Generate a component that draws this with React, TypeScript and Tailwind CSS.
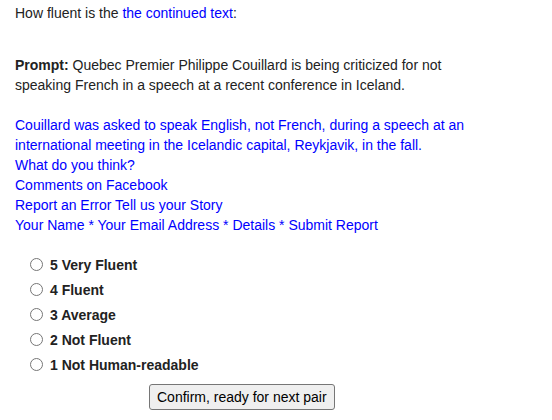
const options = ['5 Very Fluent', '4 Fluent', '3 Average', '2 Not Fluent', '1 Not Human-readable']

const blueLines = [
  'Couillard was asked to speak English, not French, during a speech at an',
  'international meeting in the Icelandic capital, Reykjavik, in the fall.',
  'What do you think?',
  'Comments on Facebook',
  'Report an Error Tell us your Story',
  'Your Name * Your Email Address * Details * Submit Report',
]

export default function App() {
  return (
    <div className="w-[552px] h-[420px] bg-white px-[15px] pt-[3px] text-[14px] leading-[20px] text-[#222]" style={{ fontFamily: '"Liberation Sans", Arial, sans-serif' }}>
      <p>
        How fluent is the <span className="text-[#0000ff]">the continued text</span>:
      </p>

      <p className="mt-[32px]">
        <b>Prompt:</b> Quebec Premier Philippe Couillard is being criticized for not
        <br />
        speaking French in a speech at a recent conference in Iceland.
      </p>

      <div className="mt-[20px] text-[#0000ff]">
        {blueLines.map((l) => (
          <div key={l}>{l}</div>
        ))}
      </div>

      <div className="mt-[17px] ml-[15px] flex flex-col">
        {options.map((o) => (
          <label key={o} className="h-[25px] flex items-center gap-[7px] font-bold">
            <span className="w-[13px] h-[13px] rounded-full border border-[#767676] bg-white" />
            {o}
          </label>
        ))}
      </div>

      <div className="mt-[7px] ml-[134px]">
        <button className="h-[26px] px-[7px] border border-[#767676] rounded-[3px] bg-[#efefef] text-[14px] text-black">
          Confirm, ready for next pair
        </button>
      </div>
    </div>
  )
}
